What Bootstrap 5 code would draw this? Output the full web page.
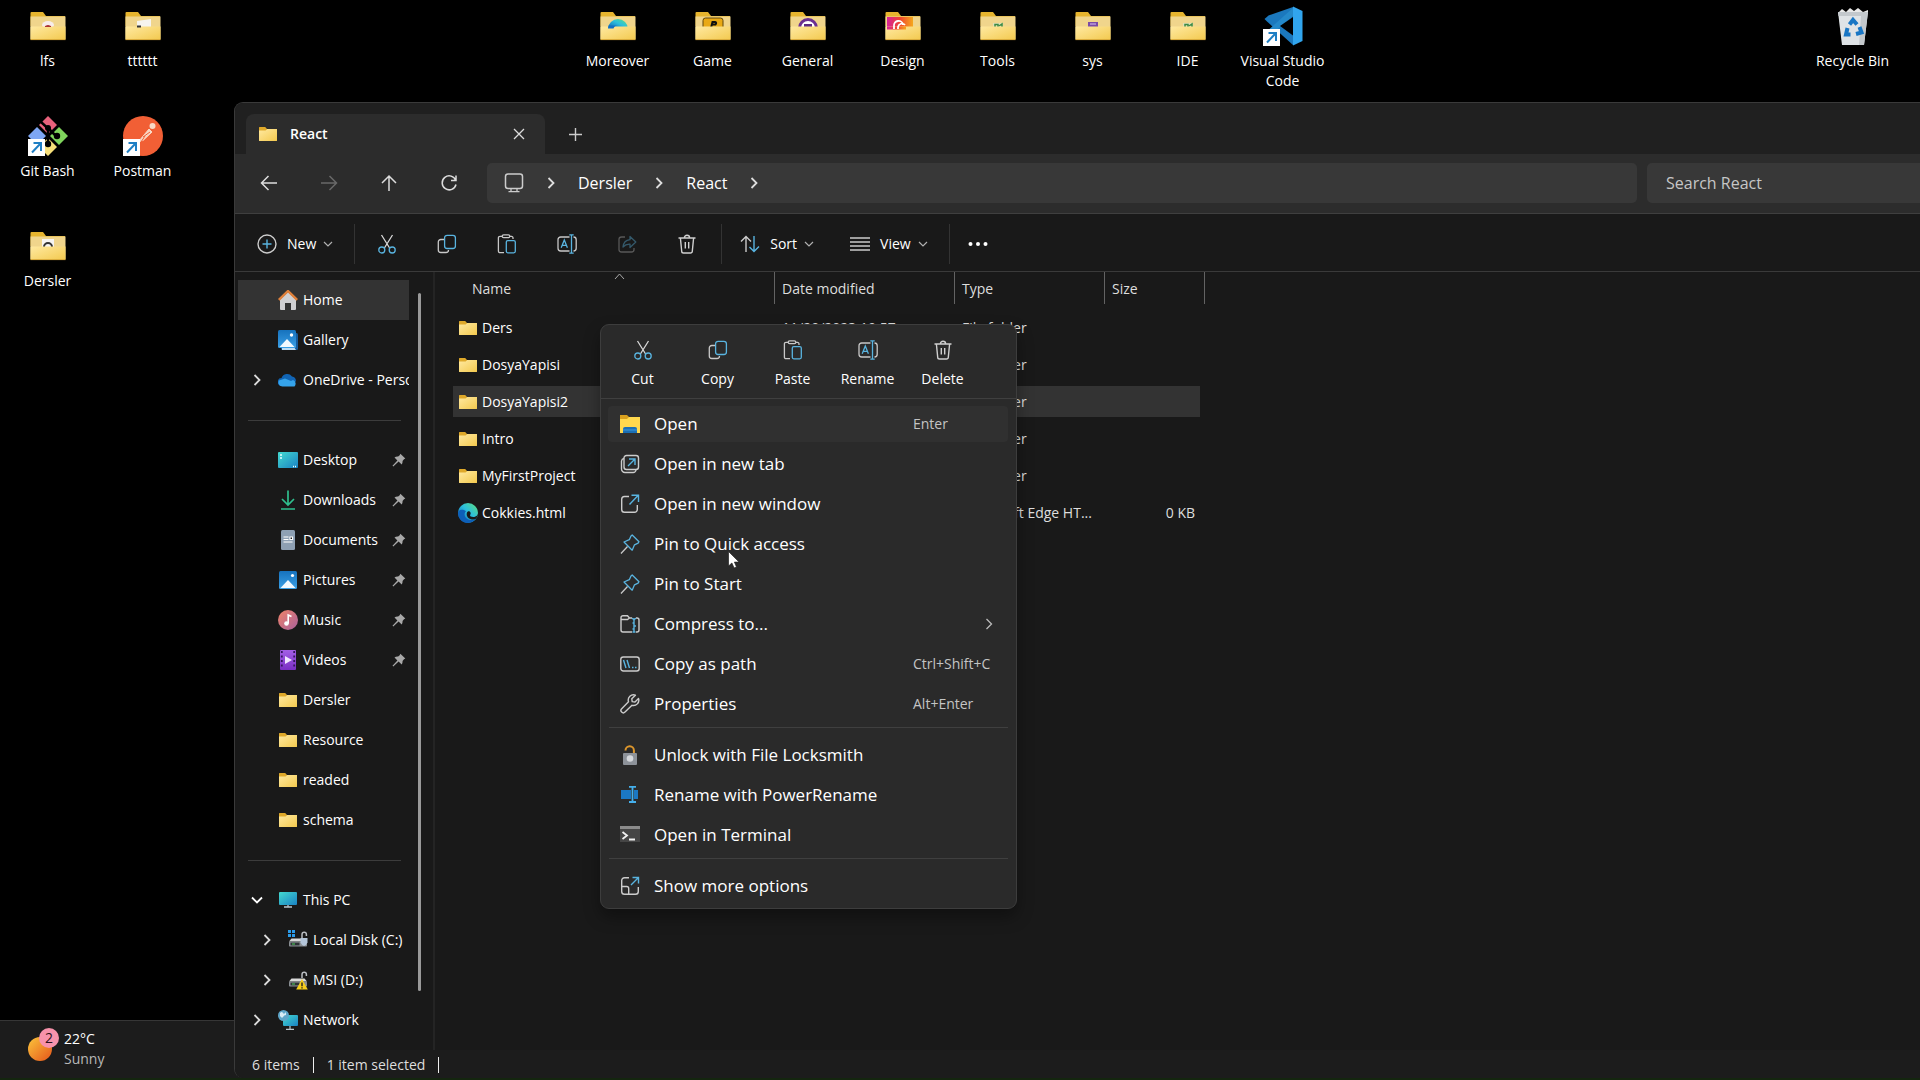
<!DOCTYPE html>
<html lang="en" data-bs-theme="dark">
<head>
<meta charset="utf-8">
<meta name="viewport" content="width=device-width, initial-scale=1">
<title>React - File Explorer</title>
<link href="https://cdn.jsdelivr.net/npm/bootstrap@5.3.0/dist/css/bootstrap.min.css" rel="stylesheet">
<style>
  body { background: #000; color: #fff; font-family: "Open Sans", "Noto Sans", sans-serif; font-size: 14px; line-height: 20px; overflow: hidden; }
  a { color: inherit; text-decoration: none; }
  button { color: inherit; }
  svg { flex: none; display: block; }
  .ic { width: 20px; height: 20px; }
  .plain { background: none; border: 0; padding: 0; }

  /* desktop */
  .desk-grid { display: grid; grid-template-columns: repeat(auto-fill, 95px); grid-auto-rows: 110px; align-content: start; }
  .desk-item { padding-top: 6px; }
  .desk-item svg { width: 40px; height: 40px; margin-bottom: 5px; }
  .c1 { grid-column: 1; } .c2 { grid-column: 2; } .c7 { grid-column: 7; } .c20 { grid-column: 20; }
  .taskbar { height: 60px; background: #1c1c1c; border-top: 1px solid #363636; border-bottom: 2px solid #14260f; padding: 8px 26px 0; }
  .taskbar svg { overflow: visible; }
  .taskbar .sub { color: #b8b8b8; }

  /* window */
  .win { position: absolute; left: 234px; top: 102px; right: 0; bottom: 2px; background: #191919; border: solid #3a3a3a; border-width: 1px 0 0 1px; border-radius: 9px 0 0 9px; overflow: hidden; }
  .titlebar { height: 51px; background: #202020; padding: 11px 0 0 11px; }
  .wtab { width: 299px; background: #2c2c2c; border-radius: 8px 8px 0 0; padding: 0 20px 0 12px; }
  .wtab span { font-weight: 600; }
  .navrow { height: 60px; background: #2c2c2c; border-bottom: 1px solid #3f3f3f; padding: 0 0 2px 4px; }
  .navbtn { width: 60px; height: 40px; }
  .addr { height: 40px; background: #383838; border-radius: 5px; margin-left: 8px; margin-right: 10px; padding-left: 17px; font-size: 16px; gap: 20px; }
  .srch { width: 273px; height: 40px; background: #383838; border: 0; border-radius: 5px 0 0 5px; padding: 0 19px; color: #fff; font-size: 16px; }
  .srch::placeholder { color: #c6c6c6; opacity: 1; }
  .tools { height: 58px; border-bottom: 1px solid #3a3a3a; padding: 2px 0 0 22px; }
  .tools .tbtn { width: 60px; height: 40px; }
  .tools .vline { width: 1px; height: 40px; background: #333; }
  .tools .wide { gap: 7px; margin-right: 21px; }
  .tools .wide .ic { margin-right: 3px; }
  .tools .wide + .wide { margin-left: 15px; }
  .tools .cmdset { margin-left: 2px; }
  .tools .gap-l { margin-left: 18px; }

  /* sidebar */
  .side { width: 200px; border-right: 2px solid #242424; padding: 8px 0 0 3px; }
  .side-list { width: 171px; }
  .side-item { height: 40px; padding-left: 40px; position: relative; white-space: nowrap; overflow: hidden; gap: 5px; }
  .side-item.nested { padding-left: 50px; }
  .side-item.on { background: #333; }
  .side-item .chev { width: 14px; height: 14px; position: absolute; left: 12px; top: 13px; }
  .side-item.nested .chev { left: 22px; }
  .side-item .pin { width: 14px; height: 14px; margin-left: auto; margin-right: 3px; }
  .side-rule { height: 40px; padding: 20px 8px 0 10px; }
  .side-rule div { border-top: 1px solid #3c3c3c; }
  .side-bar { width: 3px; height: 698px; background: #9a9a9a; border-radius: 2px; margin: 13px 0 0 9px; }

  /* file list */
  .files { width: 747px; table-layout: fixed; border-collapse: separate; border-spacing: 0 6px; margin: -6px 0 0 18px; }
  .files th { height: 34px; padding: 0; font-weight: 400; color: #dedede; vertical-align: top; }
  .files th div { height: 32px; line-height: 33px; border-right: 1px solid #636363; padding-left: 7px; position: relative; }
  .files th:first-child div { padding-left: 19px; }
  .files th:last-child div { margin-right: -5px; }
  .files td { height: 31px; padding: 0 5px 0 7px; white-space: nowrap; color: #dedede; }
  .files td:first-child { padding-left: 5px; color: #fff; }
  .files tr.on td { background: #333; }
  .sortmark { position: absolute; left: 161px; top: 0; width: 11px; height: 8px; }

  .status { height: 28px; color: #dedede; background: #1c1c1c; padding: 2px 0 0 17px; gap: 13px; }
  .status .tick { width: 1px; height: 16px; background: #eee; }

  /* context menu */
  .dropdown-menu.ctx { left: 600px; top: 324px; width: 417px; background: #2a2a2a; border: 1px solid #3d3d3d; border-radius: 9px; padding: 0 0 4px; box-shadow: 0 8px 16px rgba(0,0,0,.35); color: #fff; font-size: 14px; }
  .ctx .cmds { height: 74px; border-bottom: 1px solid #3f3f3f; padding: 15px 0 0 4px; margin-bottom: 7px; align-items: flex-start; }
  .ctx .cmds button { width: 75px; }
  .ctx .cmds svg { margin-bottom: 9px; }
  .ctx .dropdown-item { width: auto; height: 36px; margin: 0 8px 4px 7px; padding: 0 8px 0 12px; font-size: 17px; color: #fff; border-radius: 4px; display: flex; align-items: center; }
  .ctx .dropdown-item.on { background: #303030; }
  .ctx .dropdown-item svg { margin-right: 14px; }
  .ctx .hint { width: 87px; margin-left: auto; font-size: 14px; color: #c4c4c4; }
  .ctx .dropdown-item .more { width: 14px; height: 14px; margin: 0 4px 0 auto; }
  .ctx .dropdown-divider { margin: 5px 8px 9px; border-color: #3f3f3f; opacity: 1; }
  .pointer { position: absolute; left: 728px; top: 551px; width: 12px; height: 18px; z-index: 1100; }
</style>
<script src="https://cdn.jsdelivr.net/npm/bootstrap@5.3.0/dist/js/bootstrap.bundle.min.js"></script>
</head>
<body class="vh-100 d-flex flex-column">

<svg width="0" height="0" class="position-absolute" aria-hidden="true">
  <defs>
    <linearGradient id="gF" x1="0" y1="0" x2="1" y2="1"><stop offset="0" stop-color="#ffe9a0"/><stop offset="1" stop-color="#f3c94e"/></linearGradient>
    <linearGradient id="gTeal" x1="0" y1="0" x2="1" y2="1"><stop offset="0" stop-color="#43d9cf"/><stop offset="1" stop-color="#1a82c4"/></linearGradient>
    <linearGradient id="gBlue" x1="0" y1="0" x2="0" y2="1"><stop offset="0" stop-color="#1672bd"/><stop offset="1" stop-color="#3ba0e6"/></linearGradient>
    <linearGradient id="gMus" x1="0" y1="0" x2="1" y2="1"><stop offset="0" stop-color="#f08368"/><stop offset="1" stop-color="#a8609c"/></linearGradient>
    <linearGradient id="gVid" x1="0" y1="0" x2="0" y2="1"><stop offset="0" stop-color="#a35fe6"/><stop offset="1" stop-color="#7a2fc4"/></linearGradient>
    <linearGradient id="gSun" x1="0" y1="0" x2="1" y2="1"><stop offset="0" stop-color="#fbc63c"/><stop offset="1" stop-color="#e5541a"/></linearGradient>
    <linearGradient id="gEdge" x1="1" y1="0" x2="0" y2="1"><stop offset="0" stop-color="#5fe07a"/><stop offset=".45" stop-color="#2cc0dc"/><stop offset="1" stop-color="#0c59b0"/></linearGradient>
    <linearGradient id="gCC" x1="0" y1="0" x2="1" y2="0"><stop offset="0" stop-color="#d6219c"/><stop offset=".5" stop-color="#f0452e"/><stop offset="1" stop-color="#f5a81c"/></linearGradient>
  </defs>
  <!-- folders -->
  <symbol id="folder" viewBox="0 0 20 20"><path d="M1 3.500Q1 3 1.600 3h5.600l1.800 2h9.400q.6 0 .6.600V9H1z" fill="#dfa92a"/><path d="M1 6.600h6.600L9.200 5H19v11.400q0 .6-.6.600H1.600q-.6 0-.6-.6z" fill="url(#gF)"/></symbol>
  <symbol id="bigback" viewBox="0 0 40 40"><path d="M2.500 7q0-1 1-1H15l3 4h19v10H2.500z" fill="#e6b42e"/><path d="M2.500 10.500H37.500V33H2.500z" fill="#f0d58c"/></symbol>
  <symbol id="bigfront" viewBox="0 0 40 40"><path d="M2.500 20.500h35V33q0 1-1 1h-33q-1 0-1-1z" fill="url(#gF)"/><path d="M2.500 33.600h35" stroke="#d9a93a"/></symbol>
  <symbol id="shortcut" viewBox="0 0 17 17"><path d="M0 0h17v17H0z" fill="#fff"/><path d="M4 13.500 12.500 4.500M5.500 4h7.500v8" fill="none" stroke="#1f7fc4" stroke-width="2"/></symbol>
  <symbol id="edge" viewBox="0 0 20 20"><circle cx="10" cy="10" r="10" fill="url(#gEdge)"/><path d="M8 8.200c-2.500 1.700-2 7.800 4.500 8.800 2 .3 4-.3 5.500-1.400C15.500 19 12 20 10 20 3 20 0 14 0 10c0-3 4-4.800 8-1.800z" fill="#0d5fb8"/><path d="M10.200 8.300c2-.2 3.300 1.700 1.900 3.700-.5 1 1 2 3.200 2 2.400 0 4.700-1.600 4.700-4 0 2.700-1 4.800-2 5.700-3 2-9.300 0-9.300-4.200 0-1.700.6-2.900 1.500-3.200z" fill="#191919"/></symbol>
  <!-- line icons -->
  <symbol id="cut" viewBox="0 0 20 20"><g fill="none" stroke-width="1.300"><path d="M4.500 1 12.600 14M15.500 1 7.400 14" stroke="#d8d8d8"/><circle cx="4.800" cy="16" r="3" stroke="#59b4e0"/><circle cx="15.200" cy="16" r="3" stroke="#59b4e0"/></g></symbol>
  <symbol id="copy" viewBox="0 0 20 20"><g fill="none" stroke-width="1.300"><path d="M7 5.500H3.800A2.500 2.500 0 0 0 1.300 8v8a2.500 2.500 0 0 0 2.500 2.500H9A2.500 2.500 0 0 0 11.500 16" stroke="#c8c8c8"/><rect x="7.600" y="1.300" width="10.800" height="13.200" rx="2.500" stroke="#59b4e0"/></g></symbol>
  <symbol id="paste" viewBox="0 0 20 20"><g fill="none" stroke-width="1.300"><path d="M7 18.700H3A1.600 1.600 0 0 1 1.400 17V4A1.600 1.600 0 0 1 3 2.300h2M13 2.300h1.500A1.600 1.600 0 0 1 16 4v1" stroke="#c8c8c8"/><rect x="5.200" y=".8" width="7.600" height="2.900" rx="1.400" stroke="#c8c8c8"/><rect x="9.300" y="6.600" width="9" height="12.200" rx="1.500" stroke="#59b4e0"/></g></symbol>
  <symbol id="rename" viewBox="0 0 20 20"><g fill="none" stroke-width="1.300"><path d="M12.500 3H3.700A2.700 2.700 0 0 0 1 5.700v8.600A2.700 2.700 0 0 0 3.700 17h8.800M16.500 3A2.700 2.700 0 0 1 19.200 5.700v8.600A2.700 2.700 0 0 1 16.500 17" stroke="#c8c8c8"/><path d="M14.500 1v18M12.300.9h4.400M12.300 19.100h4.400M4.200 13.700 7.300 6l3.100 7.700M5.200 11.300h4.200" stroke="#59b4e0"/></g></symbol>
  <symbol id="share" viewBox="0 0 20 20"><path d="M8 3H4.500A2.500 2.500 0 0 0 2 5.500v10A2.500 2.500 0 0 0 4.500 18h10a2.500 2.500 0 0 0 2.500-2.500V14" fill="none" stroke="#585858" stroke-width="1.300"/><path d="M13 2.500 18.800 8 13 13.500v-3.300c-3-.2-5 .6-7 2.800.4-4 2.500-6.800 7-7.300z" fill="none" stroke="#34596b" stroke-width="1.300" stroke-linejoin="round"/></symbol>
  <symbol id="trash" viewBox="0 0 20 20"><path d="M1.500 4h17M7.400 3.800a2.600 2.600 0 0 1 5.200 0M3.400 4l1.300 13.200A1.800 1.800 0 0 0 6.500 19h7a1.800 1.800 0 0 0 1.800-1.800L16.600 4M8.300 8v6.500M11.700 8v6.500" fill="none" stroke="#d0d0d0" stroke-width="1.400"/></symbol>
  <symbol id="cright" viewBox="0 0 14 14"><path d="m4.500 2 5 5-5 5" fill="none" stroke="#dcdcdc" stroke-width="1.800"/></symbol>
  <symbol id="cdown" viewBox="0 0 10 10"><path d="m1 3 4 4 4-4" fill="none" stroke="#b0b0b0" stroke-width="1.200"/></symbol>
  <symbol id="pin" viewBox="0 0 14 14"><path d="M8.400.8 13.300 5.600 12 6.300 10.600 7.900c0 1.500-.3 2.500-.9 3.500L6.600 8.600 1.300 13.600.5 12.800 5.400 7.500 2.500 4.500c1-.7 2.200-1 3.600-.9L7.700 2.200z" fill="#a8a8a8"/></symbol>
  <symbol id="pinline" viewBox="0 0 20 20"><path d="M12.200 1 19 7.700l-.9 1.400-3.600 1.700-2.300 5.400L4 8l5.300-2.300L11 2z" fill="none" stroke="#59b4e0" stroke-width="1.300" stroke-linejoin="round"/><path d="m7.500 12.500-6.500 7" stroke="#c8c8c8" stroke-width="1.300"/></symbol>
  <!-- places -->
  <symbol id="gallery" viewBox="0 0 20 20"><rect x="3" y="3" width="17" height="17" rx="1.500" fill="#155a9c"/><path d="M4 20h14l-2-3H4z" fill="#bcdcf4"/><rect width="18" height="18" rx="1.500" fill="url(#gBlue)"/><path d="m1.500 17 7.500-8 7.500 8z" fill="#f2f9ff"/><circle cx="13.500" cy="5" r="1.700" fill="#fff"/></symbol>
  <symbol id="pictures" viewBox="0 0 20 20"><rect x="1" y="1" width="18" height="18" rx="1.500" fill="url(#gBlue)"/><path d="m2.500 18 7.500-8 7.500 8z" fill="#f2f9ff"/><circle cx="14.500" cy="5.500" r="1.600" fill="#fff"/></symbol>
  <symbol id="drive" viewBox="0 0 20 20"><path d="M3.500 8.500h13l2.500 3H1z" fill="#d9d9d9"/><rect x="1" y="11.500" width="18" height="5" rx=".8" fill="#8a8f94"/><rect x="2.500" y="12.600" width="9" height="2.800" fill="#2e3336"/><path d="M4 14h3" stroke="#4fd65a"/><path d="M14 8V4.500a2.200 2.200 0 0 1 4.400 0V6" fill="none" stroke="#b9bdc2" stroke-width="1.500"/></symbol>
</svg>

<!-- desktop icons -->
<main class="desk-grid flex-grow-1 text-center">
  <a href="#" class="desk-item d-flex flex-column align-items-center"><svg><use href="#bigback"/><ellipse cx="20" cy="19" rx="6" ry="4" fill="#f7ecea"/><use href="#bigfront"/><path d="M17 20.500q3-2 6 0z" fill="#a33" stroke="#a33"/></svg>lfs</a>
  <a href="#" class="desk-item d-flex flex-column align-items-center c2"><svg><use href="#bigback"/><path d="M14 15 28 13v10H14z" fill="#f6f4ee"/><use href="#bigfront"/><path d="M14 20.500h4" stroke="#333" stroke-width="2"/></svg>tttttt</a>
  <a href="#" class="desk-item d-flex flex-column align-items-center c7"><svg><use href="#bigback"/><path d="M10 23a10 10 0 0 1 20 0z" fill="url(#gEdge)"/><use href="#bigfront"/><path d="M10 22.500q0-2 .5-3h9q-3 0-4 3z" fill="#1270c4"/></svg>Moreover</a>
  <a href="#" class="desk-item d-flex flex-column align-items-center"><svg><use href="#bigback"/><rect x="10" y="12" width="20" height="13" rx="2.500" fill="#e9a914" stroke="#60460a"/><path d="M18 22l1.500-6h2.500q2 .5.500 2.500H19" fill="none" stroke="#111" stroke-width="2"/><use href="#bigfront"/></svg>Game</a>
  <a href="#" class="desk-item d-flex flex-column align-items-center"><svg><use href="#bigback"/><circle cx="20" cy="22" r="8.500" fill="#fff" stroke="#6b2f92" stroke-width="3"/><path d="M16 18h8v4h-8z" fill="#5b2a83"/><use href="#bigfront"/></svg>General</a>
  <a href="#" class="desk-item d-flex flex-column align-items-center"><svg><use href="#bigback"/><path d="M4 11h26v10H4z" fill="url(#gCC)"/><use href="#bigfront"/><path d="M4 20.500h19v3H4z" fill="url(#gCC)"/><path d="M11 23v-3a4.500 4.500 0 0 1 9-1M15 23v-2a4 4 0 0 1 7-2" fill="none" stroke="#fff" stroke-width="1.800"/></svg>Design</a>
  <a href="#" class="desk-item d-flex flex-column align-items-center"><svg><use href="#bigback"/><path d="M15 17h10v5H15z" fill="#dfe0b8"/><path d="M17 21.500v-3h3v3M21 20l3-2v3" fill="none" stroke="#3c8a45" stroke-width="1.500"/><use href="#bigfront"/></svg>Tools</a>
  <a href="#" class="desk-item d-flex flex-column align-items-center"><svg><use href="#bigback"/><path d="M15 16h10v5H15z" fill="#7a4aa8"/><path d="M17 18h6" stroke="#d9c3ee"/><use href="#bigfront"/></svg>sys</a>
  <a href="#" class="desk-item d-flex flex-column align-items-center"><svg><use href="#bigback"/><path d="M15 17h10v5H15z" fill="#dfe0b8"/><path d="M17 21.500v-3h3v3M21 20l3-2v3" fill="none" stroke="#3c8a45" stroke-width="1.500"/><use href="#bigfront"/></svg>IDE</a>
  <a href="#" class="desk-item d-flex flex-column align-items-center"><svg><path d="M30 1v38L4 15.500 1.500 13l4-3.500z" fill="#1b78bd"/><path d="M1.500 27.500 5.500 31 31 9V1z" fill="#2489ca"/><path d="m30 .5 9.500 4.500v30L30 39.500z" fill="#31a5ee"/><path d="M17 20 30 29.500V11z" fill="#000"/><use href="#shortcut" x="0" y="23" width="17" height="17"/></svg>Visual Studio Code</a>
  <a href="#" class="desk-item d-flex flex-column align-items-center c20"><svg><path d="M5 7 9 3l4 3 4-4 4 3 4-3 5 4 5-2v4H5z" fill="#e9e9e9"/><path d="M5 6h30l-4 33H9z" fill="#dfe3e6"/><path d="M5 6h30l-.5 4h-29zM28 10l-2 29h5l3.500-29z" fill="#c3c8cc"/><g fill="none" stroke="#1976c4" stroke-width="4"><path d="m16.500 18.500 3.500-4.500 4 4.500M26.500 21l2 5.500-5.500 1.500M17.500 28.500h-4.500l1.500-6.500"/></g></svg>Recycle Bin</a>
  <a href="#" class="desk-item d-flex flex-column align-items-center"><svg><path d="M20 0l9 9-9 9-9-9z" fill="#e8627c"/><path d="M31 11l9 9-9 9-9-9z" fill="#7fd45c"/><path d="M9 11l9 9-9 9-9-9z" fill="#7ea6f4"/><path d="M20 22l9 9-9 9-9-9z" fill="#f7e07a"/><path d="M12 5l8 7.500V28M20 12l8 8" fill="none" stroke="#000" stroke-width="2.500"/><g fill="#000"><circle cx="20" cy="12" r="3"/><circle cx="29" cy="20" r="3.200"/><circle cx="20" cy="28" r="3.200"/></g><use href="#shortcut" x="0" y="23" width="17" height="17"/></svg>Git Bash</a>
  <a href="#" class="desk-item d-flex flex-column align-items-center c2"><svg><circle cx="20" cy="20" r="20" fill="#f15f35"/><path d="M16 25 26 13l3 3-9 8.500zM15 27l3-2" fill="#f9d9c6" stroke="#f9d9c6"/><circle cx="29.500" cy="10" r="3" fill="#f9d9c6"/><path d="M20 21l7-5M18 26l4-6" stroke="#f15f35"/><use href="#shortcut" x="0" y="23" width="17" height="17"/></svg>Postman</a>
  <a href="#" class="desk-item d-flex flex-column align-items-center c1"><svg><use href="#bigback"/><path d="M14 13h12v9H14z" fill="#f6f4f2"/><path d="M16 21a4 4 0 0 1 8 0" fill="none" stroke="#333" stroke-width="2"/><use href="#bigfront"/></svg>Dersler</a>
</main>

<footer class="taskbar">
  <button class="plain d-flex align-items-center text-start">
    <svg width="34" height="40"><circle cx="14" cy="20" r="12" fill="url(#gSun)"/><circle cx="23" cy="9" r="10" fill="#f792ab"/><text x="23" y="14" text-anchor="middle" font-size="14" fill="#2a1118">2</text></svg>
    <span class="ms-1"><span class="d-block">22°C</span><span class="d-block sub">Sunny</span></span>
  </button>
</footer>

<!-- explorer window -->
<section class="win d-flex flex-column">
  <div class="titlebar d-flex">
    <div class="wtab d-flex align-items-center">
      <svg class="ic me-2"><use href="#folder"/></svg><span class="ms-1">React</span>
      <button class="plain ms-auto" aria-label="Close tab"><svg width="12" height="12"><path d="m1 1 10 10M11 1 1 11" stroke="#ddd" stroke-width="1.300"/></svg></button>
    </div>
    <button class="plain ms-4" aria-label="New tab"><svg width="13" height="13"><path d="M6.500 0v13M0 6.500h13" stroke="#ccc" stroke-width="1.400"/></svg></button>
  </div>

  <nav class="navrow d-flex align-items-center flex-shrink-0" aria-label="Navigation">
    <button class="plain navbtn d-grid" aria-label="Back"><svg class="ic m-auto"><path d="M18 10H3M9.500 3 2.500 10l7 7" fill="none" stroke="#ddd" stroke-width="1.500"/></svg></button>
    <button class="plain navbtn d-grid" aria-label="Forward"><svg class="ic m-auto"><path d="M2 10h15M10.500 3l7 7-7 7" fill="none" stroke="#686868" stroke-width="1.500"/></svg></button>
    <button class="plain navbtn d-grid" aria-label="Up"><svg class="ic m-auto"><path d="M10 18V3M3 10l7-7 7 7" fill="none" stroke="#ddd" stroke-width="1.500"/></svg></button>
    <button class="plain navbtn d-grid" aria-label="Refresh"><svg class="ic m-auto"><path d="M16.800 7.500A7 7 0 1 0 17 11.500M17 2.500v5h-5" fill="none" stroke="#ddd" stroke-width="1.500"/></svg></button>
    <div class="addr d-flex align-items-center flex-grow-1">
      <svg class="ic"><rect x="1.500" y="1" width="17" height="14.500" rx="2.500" fill="none" stroke="#ccc" stroke-width="1.500"/><path d="M7 15.500v2.500M13 15.500v2.500M4.500 18.700h11" stroke="#ccc" stroke-width="1.300"/></svg>
      <svg width="14" height="14"><use href="#cright"/></svg><a href="#">Dersler</a>
      <svg width="14" height="14"><use href="#cright"/></svg><a href="#">React</a>
      <svg width="14" height="14"><use href="#cright"/></svg>
    </div>
    <input class="srch" type="search" placeholder="Search React" aria-label="Search React">
  </nav>

  <div class="tools d-flex align-items-center flex-shrink-0">
    <button class="plain wide d-flex align-items-center"><svg class="ic"><circle cx="10" cy="10" r="9" fill="none" stroke="#ccc" stroke-width="1.400"/><path d="M10 5.500v9M5.500 10h9" stroke="#59b4e0" stroke-width="1.400"/></svg>New<svg width="10" height="10"><use href="#cdown"/></svg></button>
    <div class="vline"></div>
    <div class="cmdset d-flex">
      <button class="plain tbtn d-grid" aria-label="Cut"><svg class="ic m-auto"><use href="#cut"/></svg></button>
      <button class="plain tbtn d-grid" aria-label="Copy"><svg class="ic m-auto"><use href="#copy"/></svg></button>
      <button class="plain tbtn d-grid" aria-label="Paste"><svg class="ic m-auto"><use href="#paste"/></svg></button>
      <button class="plain tbtn d-grid" aria-label="Rename"><svg class="ic m-auto"><use href="#rename"/></svg></button>
      <button class="plain tbtn d-grid" aria-label="Share"><svg class="ic m-auto"><use href="#share"/></svg></button>
      <button class="plain tbtn d-grid" aria-label="Delete"><svg class="ic m-auto"><use href="#trash"/></svg></button>
    </div>
    <div class="vline ms-1"></div>
    <button class="plain wide gap-l d-flex align-items-center"><svg class="ic"><path d="M6 18V2.500M1 7.500l5-5 5 5" fill="none" stroke="#ccc" stroke-width="1.400"/><path d="M14 2v15.500M9.500 13l4.500 4.500 5-5" fill="none" stroke="#59b4e0" stroke-width="1.400"/></svg>Sort<svg width="10" height="10"><use href="#cdown"/></svg></button>
    <button class="plain wide d-flex align-items-center"><svg class="ic"><path d="M0 4h20M0 8h20M0 12h20M0 16h20" stroke="#ccc" stroke-width="1.300"/></svg>View<svg width="10" height="10"><use href="#cdown"/></svg></button>
    <div class="vline"></div>
    <button class="plain gap-l" aria-label="More"><svg class="ic" fill="#fff"><circle cx="2.500" cy="10" r="2"/><circle cx="10" cy="10" r="2"/><circle cx="17.500" cy="10" r="2"/></svg></button>
  </div>

  <div class="d-flex flex-grow-1 overflow-hidden">
    <aside class="side d-flex flex-shrink-0">
      <nav class="side-list" aria-label="Places">
        <a href="#" class="side-item on d-flex align-items-center"><svg class="ic"><path d="M2 9.500 10 2l8 7.500V19a1 1 0 0 1-1 1h-4v-7H7v7H3a1 1 0 0 1-1-1z" fill="#d0d0d2"/><path d="M.8 9.800 10 1l9.200 8.800" fill="none" stroke="#e0803a" stroke-width="2.400"/></svg>Home</a>
        <a href="#" class="side-item d-flex align-items-center"><svg class="ic"><use href="#gallery"/></svg>Gallery</a>
        <a href="#" class="side-item d-flex align-items-center"><svg class="chev"><use href="#cright"/></svg><svg class="ic"><path d="M4 16a4 4 0 0 1-.5-8A6 6 0 0 1 14 6.500a5 5 0 0 1 4 5z" fill="#1164b4"/><path d="M4.500 16.500a4 4 0 0 1-3.500-6L7 8.500l6 2.500 2-1a4 4 0 0 1 1.500 6.500z" fill="#35a3ea"/></svg>OneDrive - Personal</a>
        <div class="side-rule"><div></div></div>
        <a href="#" class="side-item d-flex align-items-center"><svg class="ic"><rect y="2" width="20" height="16" rx="1" fill="url(#gTeal)"/><path d="M2 5h2M2 8h2M15 16.500h1M17 16.500h1" stroke="#e8ffff" stroke-width="1.500"/></svg>Desktop<svg class="pin"><use href="#pin"/></svg></a>
        <a href="#" class="side-item d-flex align-items-center"><svg class="ic"><path d="M10 .5v14M4 9l6 6 6-6M3 19h14" fill="none" stroke="#2fbf8e" stroke-width="1.700"/></svg>Downloads<svg class="pin"><use href="#pin"/></svg></a>
        <a href="#" class="side-item d-flex align-items-center"><svg class="ic"><rect x="3" width="14" height="20" rx="1.500" fill="#8ea0b3"/><path d="M5.500 7h5M5.500 9.500h5M5.500 12h9M12 7h2.500v2.500H12z" stroke="#fff" stroke-width="1.200"/></svg>Documents<svg class="pin"><use href="#pin"/></svg></a>
        <a href="#" class="side-item d-flex align-items-center"><svg class="ic"><use href="#pictures"/></svg>Pictures<svg class="pin"><use href="#pin"/></svg></a>
        <a href="#" class="side-item d-flex align-items-center"><svg class="ic"><circle cx="10" cy="10" r="10" fill="url(#gMus)"/><circle cx="8.500" cy="13.500" r="2.300" fill="#fff"/><path d="M10.200 13.500V5l3.300 1.500" fill="none" stroke="#fff" stroke-width="1.600"/></svg>Music<svg class="pin"><use href="#pin"/></svg></a>
        <a href="#" class="side-item d-flex align-items-center"><svg class="ic"><rect x="2" width="16" height="20" rx="1" fill="url(#gVid)"/><path d="M3.800 1v18M16.200 1v18" stroke="#34155c" stroke-width="1.800" stroke-dasharray="2 2.500"/><path d="M7 6v8l7-4z" fill="#f1e6ff"/></svg>Videos<svg class="pin"><use href="#pin"/></svg></a>
        <a href="#" class="side-item d-flex align-items-center"><svg class="ic"><use href="#folder"/></svg>Dersler</a>
        <a href="#" class="side-item d-flex align-items-center"><svg class="ic"><use href="#folder"/></svg>Resource</a>
        <a href="#" class="side-item d-flex align-items-center"><svg class="ic"><use href="#folder"/></svg>readed</a>
        <a href="#" class="side-item d-flex align-items-center"><svg class="ic"><use href="#folder"/></svg>schema</a>
        <div class="side-rule"><div></div></div>
        <a href="#" class="side-item d-flex align-items-center"><svg class="chev"><path d="m2 4.500 5 5 5-5" fill="none" stroke="#fff" stroke-width="1.800"/></svg><svg class="ic"><rect x="1" y="2" width="18" height="13" rx="1" fill="url(#gTeal)"/><path d="M10 15v2M6 17h8" stroke="#b9c7cf" stroke-width="1.300"/></svg>This PC</a>
        <a href="#" class="side-item nested d-flex align-items-center"><svg class="chev"><use href="#cright"/></svg><svg class="ic"><use href="#drive"/><path d="M0 0h3v3H0zM4 0h3v3H4zM0 4h3v3H0zM4 4h3v3H4z" fill="#2b9be8"/><path d="M12.500 8h7v4.500q-1 2.500-3.500 3.500-2.500-1-3.500-3.500z" fill="#b4c6da"/></svg>Local Disk (C:)</a>
        <a href="#" class="side-item nested d-flex align-items-center"><svg class="chev"><use href="#cright"/></svg><svg class="ic"><use href="#drive"/><path d="m14 9 5.800 10.500H8.200z" fill="#f6cd1c"/><path d="M14 12.500v3.800M14 17.300v1.200" stroke="#222" stroke-width="1.400"/></svg>MSI (D:)</a>
        <a href="#" class="side-item d-flex align-items-center"><svg class="chev"><use href="#cright"/></svg><svg class="ic"><rect x="5" y="5" width="15" height="11" rx="1" fill="url(#gTeal)"/><path d="M12 16v3M8 19.400h8" stroke="#b9c7cf" stroke-width="1.200"/><circle cx="5.500" cy="5.500" r="5.500" fill="#5fa6c9"/><path d="M2 3q2-2 3 0t3-1v3q-2 0-3 2T2 6z" fill="#d8ecf5"/></svg>Network</a>
      </nav>
      <div class="side-bar"></div>
    </aside>

    <div class="flex-grow-1">
      <table class="files">
        <colgroup><col style="width:322px"><col style="width:180px"><col style="width:150px"><col></colgroup>
        <thead><tr><th scope="col"><div>Name<svg class="sortmark"><path d="m1 7 4.500-5L10 7" fill="none" stroke="#aaa"/></svg></div></th><th scope="col"><div>Date modified</div></th><th scope="col"><div>Type</div></th><th scope="col"><div>Size</div></th></tr></thead>
        <tbody>
          <tr><td><div class="d-flex align-items-center gap-1"><svg class="ic"><use href="#folder"/></svg>Ders</div></td><td>11/29/2023 19:57</td><td>File folder</td><td></td></tr>
          <tr><td><div class="d-flex align-items-center gap-1"><svg class="ic"><use href="#folder"/></svg>DosyaYapisi</div></td><td></td><td>File folder</td><td></td></tr>
          <tr class="on"><td><div class="d-flex align-items-center gap-1"><svg class="ic"><use href="#folder"/></svg>DosyaYapisi2</div></td><td></td><td>File folder</td><td></td></tr>
          <tr><td><div class="d-flex align-items-center gap-1"><svg class="ic"><use href="#folder"/></svg>Intro</div></td><td></td><td>File folder</td><td></td></tr>
          <tr><td><div class="d-flex align-items-center gap-1"><svg class="ic"><use href="#folder"/></svg>MyFirstProject</div></td><td></td><td>File folder</td><td></td></tr>
          <tr><td><div class="d-flex align-items-center gap-1"><svg class="ic"><use href="#edge"/></svg>Cokkies.html</div></td><td></td><td>Microsoft Edge HT...</td><td class="text-end">0 KB</td></tr>
        </tbody>
      </table>
    </div>
  </div>

  <div class="status d-flex align-items-center flex-shrink-0">
    <span>6 items</span><div class="tick"></div><span>1 item selected</span><div class="tick"></div>
  </div>
</section>

<!-- context menu -->
<div class="dropdown-menu ctx show">
  <div class="cmds d-flex">
    <button class="plain"><svg class="ic mx-auto"><use href="#cut"/></svg>Cut</button>
    <button class="plain"><svg class="ic mx-auto"><use href="#copy"/></svg>Copy</button>
    <button class="plain"><svg class="ic mx-auto"><use href="#paste"/></svg>Paste</button>
    <button class="plain"><svg class="ic mx-auto"><use href="#rename"/></svg>Rename</button>
    <button class="plain"><svg class="ic mx-auto"><use href="#trash"/></svg>Delete</button>
  </div>
  <a href="#" class="dropdown-item on"><svg class="ic"><path d="M0 1h7l2 2h11v5H0z" fill="#d9a01e"/><path d="M0 5h7l2-2h11v16H0z" fill="#ffd84e"/><path d="M3 19v-4q0-2 2-2h10q2 0 2 2v4z" fill="#1b6fb5"/><path d="M3 16h14" stroke="#3f9ada"/></svg>Open<span class="hint">Enter</span></a>
  <a href="#" class="dropdown-item"><svg class="ic" fill="none" stroke-width="1.400"><rect x="4" y="1.500" width="14.500" height="14" rx="2.500" stroke="#ccc"/><path d="M4 4.500A3 3 0 0 0 1.500 7v8a3.500 3.500 0 0 0 3.500 3.500h8a3 3 0 0 0 3-2.500" stroke="#ccc"/><path d="m8 12 6.500-6.500M9 5h6v6" stroke="#59b4e0"/></svg>Open in new tab</a>
  <a href="#" class="dropdown-item"><svg class="ic" fill="none" stroke-width="1.400"><path d="M9 2.500H4.500A2.800 2.800 0 0 0 1.700 5.300v10.200a2.800 2.800 0 0 0 2.800 2.800h10a2.800 2.800 0 0 0 2.800-2.800V11" stroke="#ccc"/><path d="m9.500 10.500 8.500-9M11.500 1.200h7V8" stroke="#59b4e0"/></svg>Open in new window</a>
  <a href="#" class="dropdown-item"><svg class="ic"><use href="#pinline"/></svg>Pin to Quick access</a>
  <a href="#" class="dropdown-item"><svg class="ic"><use href="#pinline"/></svg>Pin to Start</a>
  <a href="#" class="dropdown-item"><svg class="ic" fill="none" stroke-width="1.400"><path d="M12 4H9.500L7.500 1.700H3A2 2 0 0 0 1 3.700V16a2 2 0 0 0 2 2h9M1 5.500h6.500L9.500 4M16 4h1a2 2 0 0 1 2 2v10a2 2 0 0 1-2 2h-1" stroke="#ccc"/><path d="M12 4.500q2 0 2 2v12M16 4.500q-2 0-2 2M12.500 9H14M14 12h2M12.500 15H14M12.500 18h3" stroke="#59b4e0"/></svg>Compress to...<svg class="more"><path d="m4.500 2 5 5-5 5" fill="none" stroke="#bbb" stroke-width="1.300"/></svg></a>
  <a href="#" class="dropdown-item"><svg class="ic" fill="none" stroke-width="1.400"><rect x=".8" y="3" width="18.400" height="14" rx="2.500" stroke="#ccc"/><path d="m3.500 6 2.500 8M7 6l2.500 8M12 13.500h1.500M15 13.500h1.500" stroke="#59b4e0"/></svg>Copy as path<span class="hint">Ctrl+Shift+C</span></a>
  <a href="#" class="dropdown-item"><svg class="ic"><path d="M18.500 4.500 15 8l-2.800-.4-.4-2.800L15.400 1.200A5.300 5.300 0 0 0 8.500 7.800L1.700 14.700a2.200 2.200 0 0 0 3.300 3.400l7-6.800a5.300 5.300 0 0 0 6.500-6.800z" fill="none" stroke="#ccc" stroke-width="1.400" stroke-linejoin="round"/></svg>Properties<span class="hint">Alt+Enter</span></a>
  <hr class="dropdown-divider">
  <a href="#" class="dropdown-item"><svg class="ic"><path d="M5.500 5.500a4.200 4.200 0 0 1 8.400 0V8" fill="none" stroke="#dc962c" stroke-width="2"/><rect x="3" y="8" width="14" height="12" rx="1" fill="#8d9299"/><circle cx="10" cy="13.500" r="3.300" fill="#d5d8dc"/></svg>Unlock with File Locksmith</a>
  <a href="#" class="dropdown-item"><svg class="ic"><path d="M1 5h10v9H1zM14 5h4v9h-4z" fill="#1b78c4"/><path d="M12.500 2v15M9 1.800h7M9 17h7" stroke="#45b0ec" stroke-width="1.800"/></svg>Rename with PowerRename</a>
  <a href="#" class="dropdown-item"><svg class="ic"><path d="M0 2h20v15H0z" fill="#454545"/><path d="M0 1h20v3H0z" fill="#8b8b8b"/><path d="M2.500 7 7 10.500 2.500 14M9 14.500h6" fill="none" stroke="#f0f0f0" stroke-width="1.800"/></svg>Open in Terminal</a>
  <hr class="dropdown-divider">
  <a href="#" class="dropdown-item mb-0"><svg class="ic" fill="none" stroke-width="1.400"><path d="M9 1.700H4.500a2.800 2.800 0 0 0-2.800 2.800v11a2.800 2.800 0 0 0 2.800 2.800h11a2.800 2.800 0 0 0 2.800-2.800V11M1.700 10.500h5a2 2 0 0 1 2 2v5.800" stroke="#ccc"/><path d="m11 9 7-7M12.500 1.500h6v6" stroke="#59b4e0"/></svg>Show more options</a>
</div>

<svg class="pointer" viewBox="0 0 12 18"><path d="M.5.500v14.500l3.400-3 2.200 5 2.400-1-2.100-4.900h4.700z" fill="#fff" stroke="#222" stroke-width=".7"/></svg>
</body>
</html>
